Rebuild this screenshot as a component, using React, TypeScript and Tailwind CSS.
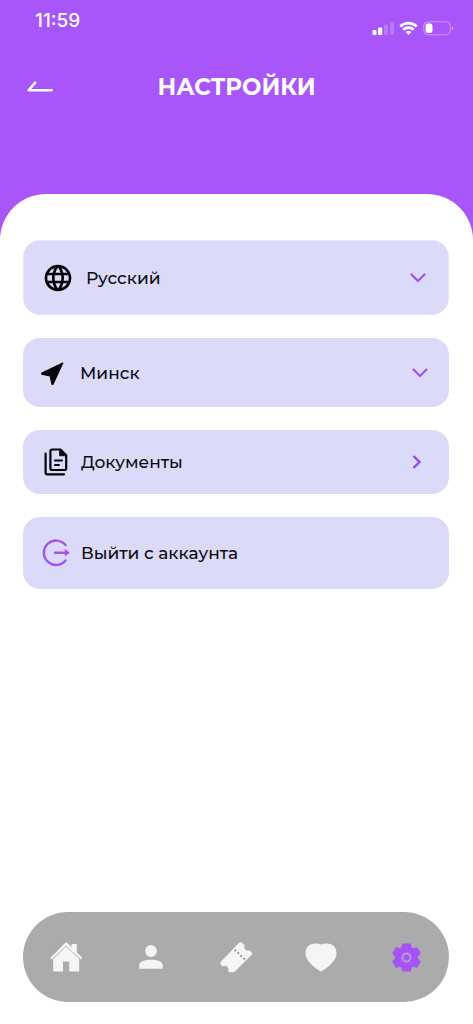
import type { ReactNode } from "react";
import { MdLanguage } from "react-icons/md";

function StatusIcons() {
  return (
    <svg width="82" height="16" viewBox="0 0 82 16" aria-hidden="true">
      <g fill="#fff">
        <rect x="0.5" y="10" width="4" height="5" rx="1" />
        <rect x="6" y="7.5" width="4.2" height="7.5" rx="1" />
        <rect x="12" y="4.5" width="4" height="10.5" rx="1" opacity="0.22" />
        <rect x="18" y="2" width="4" height="13" rx="1" opacity="0.22" />
      </g>
      <g fill="none" stroke="#fff" strokeWidth="2.7">
        <path d="M28.3 6.4a12 12 0 0 1 16.4 0" />
        <path d="M31.3 9.7a7.6 7.6 0 0 1 10.4 0" />
      </g>
      <path d="M33.7 12.1a4.2 4.2 0 0 1 5.6 0L36.5 15z" fill="#fff" />
      <rect x="51.8" y="1.8" width="26.4" height="13" rx="4" fill="none" stroke="#fff" strokeOpacity="0.4" />
      <rect x="53.5" y="3.5" width="7" height="9.6" rx="2.4" fill="#fff" />
      <path d="M79.8 6.2q3.2 2.1 0 4.2z" fill="#fff" opacity="0.45" />
    </svg>
  );
}

function BackArrow() {
  return (
    <svg width="26" height="12" viewBox="0 0 26 12" fill="none" stroke="#fff" strokeWidth="2.4" strokeLinecap="round" strokeLinejoin="round" aria-hidden="true">
      <path d="M8.200 1.600L1.600 9.200h23" />
    </svg>
  );
}

function Chevron() {
  return (
    <svg width="16" height="10" viewBox="0 0 16 10" fill="none" stroke="#9f52ee" strokeWidth="2.200" strokeLinecap="round" strokeLinejoin="round" className="shrink-0" aria-hidden="true">
      <path d="M1.500 1.500L8 8l6.500-6.500" />
    </svg>
  );
}

function ChevronRight() {
  return (
    <svg width="10" height="16" viewBox="0 0 10 16" fill="none" stroke="#9747ee" strokeWidth="2.400" className="shrink-0" aria-hidden="true">
      <path d="M1.500 2L7.500 8l-6 6" />
    </svg>
  );
}

function LocationArrow() {
  return (
    <svg width="24" height="24" viewBox="0 0 24 24" fill="#060509" stroke="#060509" strokeWidth="1.200" strokeLinejoin="round" className="shrink-0" aria-hidden="true">
      <path d="M22.800 2L13 23.300h-1L10.200 15 1.800 13.200v-1.200z" />
    </svg>
  );
}

function DocumentsIcon() {
  return (
    <svg width="24" height="28" viewBox="0 0 24 28" fill="none" stroke="#060509" strokeWidth="2.200" strokeLinecap="round" strokeLinejoin="round" className="shrink-0" aria-hidden="true">
      <path d="M1.600 5.500v19q0 1.800 1.800 1.800H20" />
      <path d="M8.200 1.500h8.300l5.700 5.700v13q0 1.800-1.800 1.800H8.200q-1.800 0-1.800-1.800V3.300q0-1.800 1.800-1.800z" />
      <path d="M16 1.500l6.200 6.200H16z" fill="#060509" strokeWidth="1" />
      <path d="M11 12.500h7M11 17h4" strokeWidth="2" />
    </svg>
  );
}

function LogoutIcon() {
  return (
    <svg width="28" height="28" viewBox="0 0 28 28" fill="none" stroke="#a552f3" strokeWidth="2.400" className="shrink-0" aria-hidden="true">
      <path d="M23.500 6A12.200 12.200 0 1 0 23.500 21.500" strokeLinecap="round" />
      <path d="M13 13.700h11" strokeLinecap="round" />
      <path d="M22.800 9.800l5 3.900-5 3.900z" fill="#a552f3" stroke="none" />
    </svg>
  );
}

function HomeIcon() {
  return (
    <svg width="34" height="32" viewBox="0 0 34 32" fill="#f5f5f5" aria-hidden="true">
      <path d="M17.200 5L30.200 17.500V30.500H20.200V20.500H14V30.500H4.200V17.500z" />
      <path d="M1.800 17.200L17.200 2.400l15.400 14.800" fill="none" stroke="#ababab" strokeWidth="4.400" />
      <path d="M1.200 17L15.800 2.200q1.400-1.300 2.800 0l4 4V3h5.200v8.200L33.400 17l-1.600 1.600L17.200 4.800 2.700 18.600z" />
    </svg>
  );
}

function PersonIcon() {
  return (
    <svg width="24" height="24" viewBox="0 0 24 24" fill="#f5f5f5" aria-hidden="true">
      <circle cx="12" cy="6" r="5.900" />
      <path d="M.2 23.200v-3C.2 16.500 6 14.800 12 14.800s11.700 1.700 11.700 5.400v3q0 .5-.5.5H.7q-.5 0-.5-.5z" />
    </svg>
  );
}

function TicketIcon() {
  return (
    <svg width="34" height="32" viewBox="0 0 34 32" fill="#f5f5f5" aria-hidden="true">
      <path d="M20.300 1.600q1.300-1.200 2.600 0l2.600 2.600q-.9 2.800 1 4.500 1.800 1.500 4.300.7l2 2q1 1.200-.1 2.400L16.300 30q-1.200 1.200-2.700 1.200h-3.100q-1.200 0-1.200-1.300.7-3-1.300-4.400-1.600-1.100-3.300-.3-1 .4-1.700-.4l-1.300-1.600q-1-1.200.2-2.400z" />
      <path d="M15.500 8.700l11.500 10.700" fill="none" stroke="#999" strokeWidth="2" strokeDasharray="2 2.100" />
    </svg>
  );
}

function HeartIcon() {
  return (
    <svg width="32" height="30" viewBox="0 0 32 30" fill="#f5f5f5" aria-hidden="true">
      <path d="M16 2.600C10 0 .500 1.400.500 11c0 7.600 7.500 13.500 14 17.700q1.500 1 3 0C24 24.500 31.500 18.600 31.500 11 31.500 1.400 22 0 16 2.600z" />
    </svg>
  );
}

function GearIcon() {
  return (
    <svg width="29" height="29" viewBox="0 0 30 30" aria-hidden="true">
      <path d="M11 1h8l1 4 1.800 1 3.900-1.300 3.600 6-2.800 3v2.600l2.800 3-3.600 6-3.900-1.300-1.800 1-1 4h-8l-1-4-1.800-1-3.900 1.300-3.600-6 2.800-3v-2.600l-2.800-3 3.600-6L8.200 6 10 5z" fill="#a552f7" stroke="#a552f7" strokeLinejoin="round" />
      <circle cx="15" cy="15" r="4.200" fill="none" stroke="#b5a3c6" strokeWidth="2" />
    </svg>
  );
}

const selectClass =
  "min-w-0 flex-1 cursor-pointer appearance-none border-0 bg-transparent p-0 text-[17px] leading-6 font-medium text-[#0c0b11] outline-none";

const navItems: { label: string; icon: ReactNode; current?: boolean }[] = [
  { label: "Главная", icon: <HomeIcon /> },
  { label: "Профиль", icon: <PersonIcon /> },
  { label: "Билеты", icon: <TicketIcon /> },
  { label: "Избранное", icon: <HeartIcon /> },
  { label: "Настройки", icon: <GearIcon />, current: true },
];

export default function App() {
  return (
    <div className="flex min-h-screen flex-col bg-[#a855f9] font-['Montserrat','Inter',sans-serif] text-[#0c0b11]">
      <div className="flex items-start justify-between pt-2 pr-[19px] pl-[35px] text-white">
        <span className="font-['Inter',sans-serif] text-[19px] leading-[26px] font-medium">11:59</span>
        <span className="pt-3">
          <StatusIcons />
        </span>
      </div>

      <header className="grid grid-cols-[53px_1fr_53px] items-center pt-[35px] pb-[91px]">
        <button type="button" aria-label="Назад" className="flex h-8 cursor-pointer items-center justify-end">
          <BackArrow />
        </button>
        <h1 className="text-center text-[23px] leading-8 font-bold text-white">НАСТРОЙКИ</h1>
      </header>

      <div className="flex flex-1 flex-col rounded-t-[46px] bg-white pt-[46px] pr-6 pb-[22px] pl-[23px]">
        <main className="flex flex-col gap-[23px]">
          <label className="flex h-[75px] items-center rounded-[17px] border border-[#e6e4fb] bg-[#dbdaf9] pr-[22px] pl-[18px]">
            <MdLanguage size={32} color="#060509" className="mr-3 shrink-0" aria-hidden="true" />
            <select aria-label="Язык" className={selectClass}>
              <option>Русский</option>
              <option>Беларуская</option>
              <option>English</option>
            </select>
            <Chevron />
          </label>

          <label className="flex h-[69px] items-center rounded-[17px] bg-[#dbdaf9] pr-[21px] pl-[17px]">
            <LocationArrow />
            <span className="flex min-w-0 flex-1 pl-4">
              <select aria-label="Город" className={selectClass}>
                <option>Минск</option>
                <option>Гродно</option>
                <option>Брест</option>
              </select>
            </span>
            <Chevron />
          </label>

          <a href="#documents" className="flex h-[64px] items-center rounded-[17px] bg-[#dbdaf9] pr-[27px] pl-[21px]">
            <DocumentsIcon />
            <span className="ml-[13px] flex-1 text-[17px] leading-6 font-medium">Документы</span>
            <ChevronRight />
          </a>

          <button type="button" className="flex h-[72px] cursor-pointer items-center rounded-[17px] bg-[#dbdaf9] pr-[21px] pl-[19px] text-left">
            <LogoutIcon />
            <span className="ml-[11px] text-[17px] leading-6 font-medium">Выйти с аккаунта</span>
          </button>
        </main>

        <nav aria-label="Основное меню" className="mt-auto flex h-[90px] items-center rounded-full bg-[#ababab]">
          {navItems.map((item) => (
            <a
              key={item.label}
              href="#"
              aria-label={item.label}
              aria-current={item.current ? "page" : undefined}
              className="flex h-full flex-1 items-center justify-center"
            >
              {item.icon}
            </a>
          ))}
        </nav>
      </div>
    </div>
  );
}
